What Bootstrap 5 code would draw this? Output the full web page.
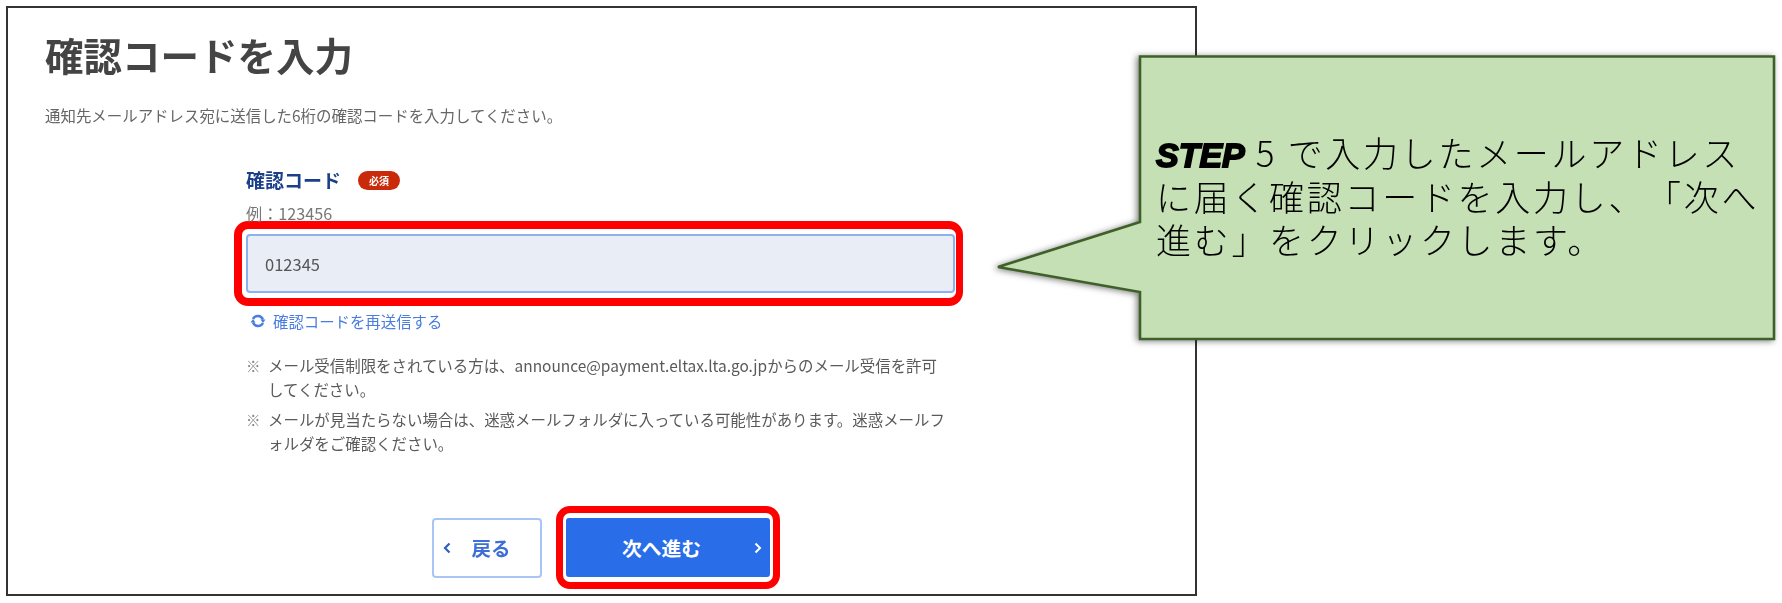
<!DOCTYPE html>
<html lang="ja">
<head>
<meta charset="utf-8">
<title>確認コードを入力</title>
<link rel="stylesheet" href="https://cdn.jsdelivr.net/npm/bootstrap@5.3.0/dist/css/bootstrap.min.css">
<style>
html,body{height:603px;overflow:hidden;background:#fff;margin:0}
body{font-family:"Noto Sans CJK JP","Liberation Sans",sans-serif;color:#555;position:relative;text-spacing-trim:space-all}
.shot-frame{margin:6px 0 0 6px;width:1191px;height:590px;border:2px solid #333;padding:23px 0 0 37px;box-sizing:border-box}
.blur-soft{filter:blur(.4px)}
.shot-title{font-size:38.5px;line-height:46px;font-weight:700;color:#444;margin:0}
.shot-sub{font-size:15.45px;line-height:22px;color:#666;margin:27px 0 0}
.form-area{margin:42px 0 0 201px;width:709px}
.field-label{font-size:19px;line-height:24px;font-weight:700;color:#1c3f8a;margin:0}
.req-pill{background:#c92a0a;color:#fff;font-size:10px;line-height:19px;height:19px;width:42px;padding:0;border-radius:10px;font-weight:700;margin-left:17px}
.field-eg{font-size:16.2px;line-height:22px;color:#777;margin-top:10px}
.hl-input{margin:-3px 0 0 -12px;width:729px;border:8px solid #f00;border-right-width:7px;border-radius:14px;padding:5px 1px 5px 4px;background:#fff}
.code-input.form-control{height:59px;background:#e8edf6;border:2px solid #8eb1ee;border-radius:4px;font-size:16.5px;color:#555;padding:0 17px;box-shadow:none}
.resend{font-size:15.4px;line-height:22px;color:#4a7de0;margin-top:4px;padding-left:4px;gap:7px;text-decoration:none}
.note-list{margin:22px 0 0;padding:0;list-style:none;font-size:15.45px;line-height:23.5px;color:#5a5a5a;width:706px}
.note-list li+li{margin-top:7px}
.note-mark{flex:0 0 22px;color:#888;font-size:14.5px}
.btn-row{margin:51px 0 0 186px;gap:14px}
.btn-back.btn{width:110px;height:60px;border:2px solid #a9c5f5;border-radius:4px;color:#3d6fd6;background:#fff;font-size:19.5px;font-weight:700;padding:0 0 0 8px;position:relative}
.hl-btn{border:7px solid #f00;border-radius:14px;padding:5px 3px;background:#fff}
.btn-next.btn{width:204px;height:59px;border:0;border-radius:3px;background:#2a6de8;color:#fff;font-size:19.8px;font-weight:700;padding:0 13px 0 0;position:relative}
.chev{position:absolute;top:50%;transform:translateY(-50%)}
.chev-l{left:9px}
.chev-r{right:8px}
.callout{position:absolute;left:990px;top:50px;width:792px;height:295px;filter:drop-shadow(-2px 1px 3px rgba(0,0,0,.5))}
.callout-text{position:absolute;left:1156px;top:130px;font-size:35px;line-height:43.5px;letter-spacing:2.7px;color:#000;font-weight:300;white-space:nowrap}
.step-word{font-family:"Liberation Sans",sans-serif;font-style:italic;font-weight:700;letter-spacing:0;font-size:34px;line-height:1;-webkit-text-stroke:1.8px #000;color:#000;margin-right:11px}
</style>
</head>
<body>
<div class="shot-frame">
  <div class="blur-soft">
  <h1 class="shot-title">確認コードを入力</h1>
  <p class="shot-sub">通知先メールアドレス宛に送信した6桁の確認コードを入力してください。</p>
  <div class="form-area">
    <label class="field-label d-flex align-items-center" for="code">確認コード<span class="badge req-pill d-inline-flex align-items-center justify-content-center">必須</span></label>
    <div class="field-eg">例：123456</div>
    <div class="hl-input">
      <input id="code" class="form-control code-input" type="text" value="012345">
    </div>
    <a class="resend d-flex align-items-center" href="#">
      <svg width="16" height="14" viewBox="0 0 16 14" fill="none" stroke="#4a7de0" stroke-width="2.400"><path d="M3 5A5.500 5.500 0 0 1 13 5.500"/><path d="M13 9A5.500 5.500 0 0 1 3 8.500"/><path d="M10.500 5.500h5L13 9z" fill="#4a7de0" stroke="none"/><path d="M.5 8.500h5L3 5z" fill="#4a7de0" stroke="none"/></svg>
      <span>確認コードを再送信する</span>
    </a>
    <ul class="note-list">
      <li class="d-flex"><span class="note-mark">※</span><span>メール受信制限をされている方は、announce@payment.eltax.lta.go.jpからのメール受信を許可してください。</span></li>
      <li class="d-flex"><span class="note-mark">※</span><span>メールが見当たらない場合は、迷惑メールフォルダに入っている可能性があります。迷惑メールフォルダをご確認ください。</span></li>
    </ul>
    <div class="btn-row d-flex align-items-center">
      <button type="button" class="btn btn-back">
        <svg class="chev chev-l" width="8" height="12" viewBox="0 0 8 12" fill="none" stroke="#2f5fc0" stroke-width="2.200"><path d="M6.500 1.500 2 6l4.500 4.500"/></svg>
        戻る
      </button>
      <div class="hl-btn">
        <button type="button" class="btn btn-next">次へ進む
          <svg class="chev chev-r" width="8" height="12" viewBox="0 0 8 12" fill="none" stroke="#fff" stroke-width="2"><path d="M1.500 1.500 6 6l-4.500 4.500"/></svg>
        </button>
      </div>
    </div>
  </div>
  </div>
</div>
<svg class="callout" viewBox="0 0 792 295"><polygon points="150,6.500 784,6.500 784,289 150,289 150,242 8,217 150,172" fill="#c5e0b4" stroke="#3f6129" stroke-width="2.600"/></svg>
<div class="callout-text"><span class="step-word">STEP</span>5 で入力したメールアドレス<br>に届く確認コードを入力し、「次へ<br>進む」をクリックします。</div>
<script src="https://cdn.jsdelivr.net/npm/bootstrap@5.3.0/dist/js/bootstrap.bundle.min.js"></script>
</body>
</html>
